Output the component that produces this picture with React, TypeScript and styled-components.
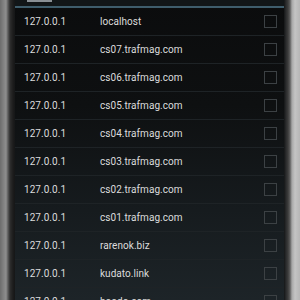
import React from "react";
import styled, { createGlobalStyle } from "styled-components";

const Global = createGlobalStyle`
  html, body { margin: 0; padding: 0; background: #1a1c1d; }
  body { width: 300px; height: 300px; overflow: hidden; }
`;

const Frame = styled.div`
  width: 300px;
  height: 300px;
  display: flex;
  overflow: hidden;
`;

const LeftBezel = styled.div`
  width: 15px;
  flex: none;
  background: linear-gradient(
    90deg,
    #6c6c6c 0px,
    #7e7e7e 3px,
    #8e8e8e 6px,
    #5a5a5a 8px,
    #2e2e2e 10px,
    #1c1c1c 13px,
    #151617 15px
  );
`;

const RightBezel = styled.div`
  width: 16px;
  flex: none;
  background: linear-gradient(
    90deg,
    #141617 0px,
    #2a2b2c 2px,
    #3c3c3c 4px,
    #5e5e5e 6px,
    #a8a8a8 8px,
    #c4c4c4 11px,
    #b6b6b6 16px
  );
`;

const Screen = styled.div`
  flex: 1;
  display: flex;
  flex-direction: column;
  background: linear-gradient(180deg, #0b0c0d 0%, #0e1011 35%, #161b1e 70%, #1d2428 100%);
  font-family: Roboto, "Noto Sans", sans-serif;
`;

const TopBar = styled.div`
  height: 6px;
  flex: none;
  background: #121618;
  border-bottom: 2px solid #3f5d6c;
  display: flex;
  padding-left: 12px;
`;

const Tab = styled.div`
  width: 25px;
  height: 2px;
  background: #8a9095;
`;

const Row = styled.div`
  height: 27px;
  flex: none;
  display: flex;
  align-items: center;
  padding-left: 9px;
  padding-right: 7px;
  border-bottom: 1px solid #1e2326;
  color: #dcdcdc;
  font-size: 10px;
  letter-spacing: 0.05px;
`;

const Ip = styled.span`
  width: 76px;
  flex: none;
`;

const Host = styled.span`
  flex: 1;
  white-space: nowrap;
`;

const Check = styled.span`
  width: 13px;
  height: 13px;
  box-sizing: border-box;
  border: 1px solid #3c4144;
  flex: none;
`;

const hosts = [
  "localhost",
  "cs07.trafmag.com",
  "cs06.trafmag.com",
  "cs05.trafmag.com",
  "cs04.trafmag.com",
  "cs03.trafmag.com",
  "cs02.trafmag.com",
  "cs01.trafmag.com",
  "rarenok.biz",
  "kudato.link",
  "hoodo.com",
];

export default function App() {
  return (
    <>
      <Global />
      <Frame>
        <LeftBezel />
        <Screen>
          <TopBar>
            <Tab />
          </TopBar>
          {hosts.map((h) => (
            <Row key={h}>
              <Ip>127.0.0.1</Ip>
              <Host>{h}</Host>
              <Check />
            </Row>
          ))}
        </Screen>
        <RightBezel />
      </Frame>
    </>
  );
}
